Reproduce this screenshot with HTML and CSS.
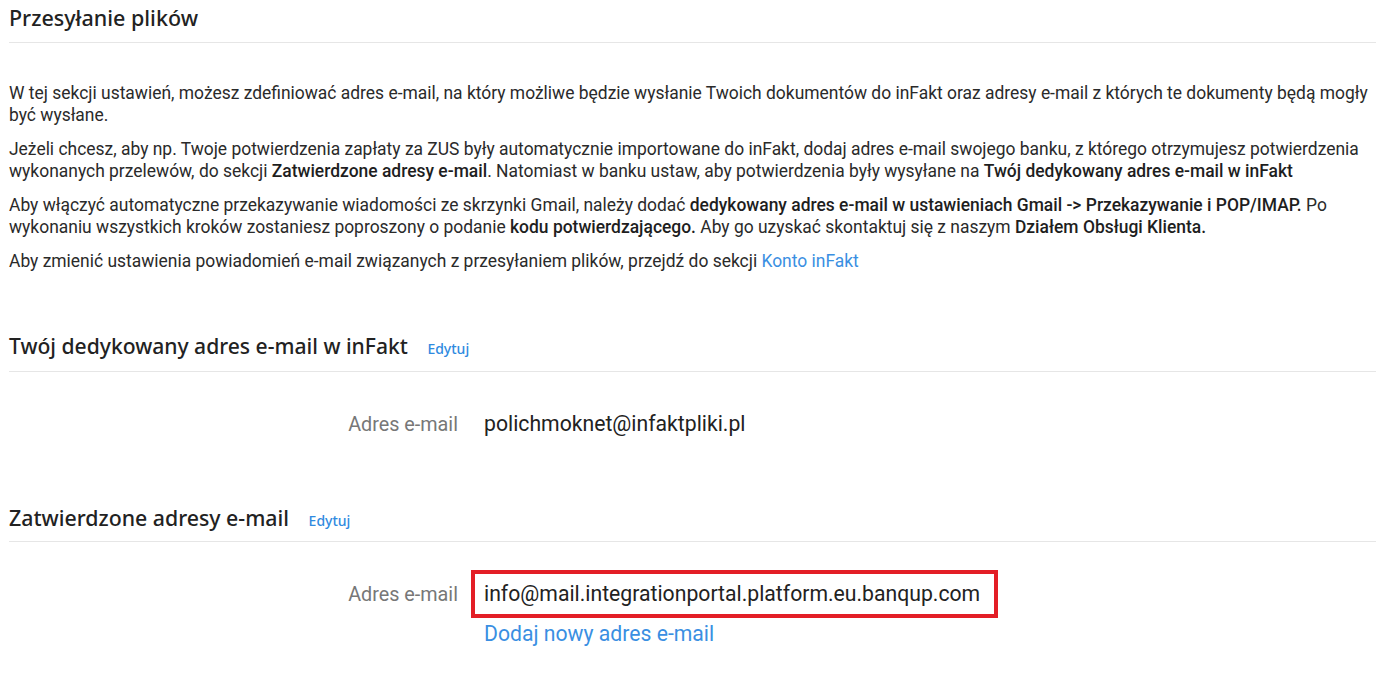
FILE: index.html
```html
<!DOCTYPE html>
<html lang="pl">
<head>
<meta charset="utf-8">
<title>Przesyłanie plików</title>
<link rel="stylesheet" href="styles.css">
</head>
<body>
<div class="page">
  <h1 class="section-title">Przesyłanie plików</h1>
  <div class="intro">
    <p>W tej sekcji ustawień, możesz zdefiniować adres e-mail, na który możliwe będzie wysłanie Twoich dokumentów do inFakt oraz adresy e-mail z których te dokumenty będą mogły być wysłane.</p>
    <p>Jeżeli chcesz, aby np. Twoje potwierdzenia zapłaty za ZUS były automatycznie importowane do inFakt, dodaj adres e-mail swojego banku, z którego otrzymujesz potwierdzenia wykonanych przelewów, do sekcji <b>Zatwierdzone adresy e-mail</b>. Natomiast w banku ustaw, aby potwierdzenia były wysyłane na <b>Twój dedykowany adres e-mail w inFakt</b></p>
    <p>Aby włączyć automatyczne przekazywanie wiadomości ze skrzynki Gmail, należy dodać <b>dedykowany adres e-mail w ustawieniach Gmail -&gt; Przekazywanie i POP/IMAP.</b> Po wykonaniu wszystkich kroków zostaniesz poproszony o podanie <b>kodu potwierdzającego.</b> Aby go uzyskać skontaktuj się z naszym <b>Działem Obsługi Klienta.</b></p>
    <p>Aby zmienić ustawienia powiadomień e-mail związanych z przesyłaniem plików, przejdź do sekcji <a href="#" class="link">Konto inFakt</a></p>
  </div>

  <h2 class="section-title sub sub-first">Twój dedykowany adres e-mail w inFakt <a href="#" class="edit">Edytuj</a></h2>
  <div class="row row-first">
    <div class="label">Adres e-mail</div>
    <div class="value">polichmoknet@infaktpliki.pl</div>
  </div>

  <h2 class="section-title sub sub-second">Zatwierdzone adresy e-mail <a href="#" class="edit">Edytuj</a></h2>
  <div class="row row-second">
    <div class="label">Adres e-mail</div>
    <div class="value">
      <div class="highlight">info@mail.integrationportal.platform.eu.banqup.com</div>
      <a href="#" class="add-link">Dodaj nowy adres e-mail</a>
    </div>
  </div>
</div>
</body>
</html>
```

FILE: styles.css
```css
html, body {
  margin: 0;
  padding: 0;
  background: #ffffff;
}

body {
  font-family: Roboto, "Liberation Sans", sans-serif;
  color: #2a2a2a;
}

.page {
  padding: 0 20px 0 9px;
}

.section-title {
  font-family: "Noto Sans", "Open Sans", sans-serif;
  font-weight: 500;
  font-size: 21.5px;
  line-height: 26px;
  color: #222222;
  margin: 0;
  padding: 5px 0 11px 0;
  border-bottom: 1px solid #e6e6e6;
}

.sub {
  font-size: 21.1px;
}

.sub-first {
  margin-top: 61px;
  padding-top: 0;
  padding-bottom: 12px;
}

.sub-second {
  margin-top: 67px;
  padding-top: 0;
  padding-bottom: 10px;
  font-size: 21.3px;
}

.edit {
  font-family: "Noto Sans", "Open Sans", sans-serif;
  font-size: 14px;
  line-height: 1;
  font-weight: 500;
  color: #2f8ae0;
  text-decoration: none;
  margin-left: 14px;
}

.intro {
  margin-top: 39px;
}

.intro p {
  font-size: 17.45px;
  line-height: 22px;
  margin: 0 0 12px 0;
}

.intro p:last-child {
  margin-bottom: 0;
}

.intro b {
  font-weight: 500;
  color: #1e1e1e;
}

.link {
  color: #3a8fe2;
  text-decoration: none;
}

.row {
  display: flex;
  align-items: baseline;
}

.row-first {
  margin-top: 39px;
}

.row-second {
  margin-top: 28px;
}

.label {
  width: 449px;
  flex: none;
  text-align: right;
  margin-right: 26px;
  font-size: 19.8px;
  line-height: 26px;
  color: #777777;
}

.value {
  font-size: 21.2px;
  line-height: 26px;
  color: #222222;
  display: flex;
  flex-direction: column;
  align-items: flex-start;
}

.highlight {
  border: 4px solid #e31e26;
  padding: 7px 14px 7px 9px;
  margin-left: -13px;
}

.add-link {
  color: #3a8fe2;
  text-decoration: none;
  margin-top: 3px;
}
```
